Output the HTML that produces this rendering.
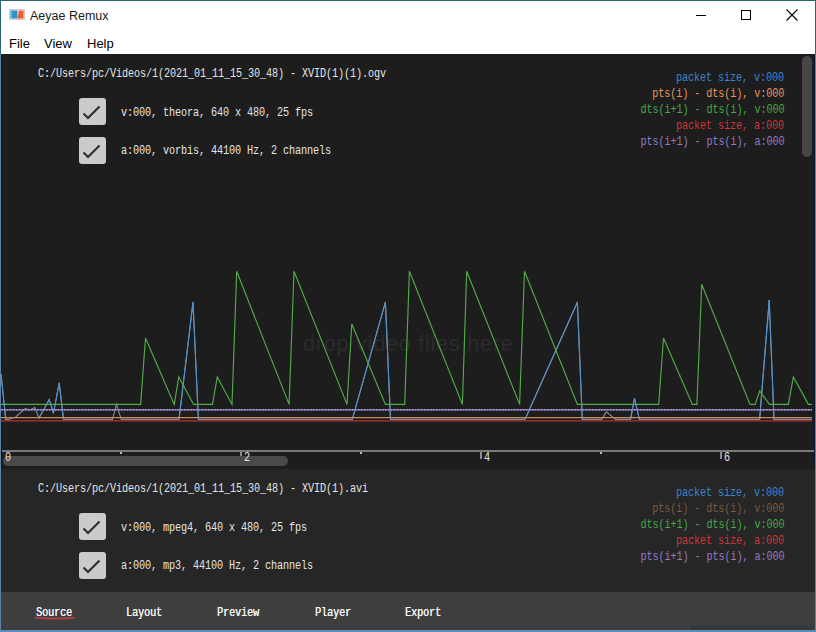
<!DOCTYPE html>
<html><head><meta charset="utf-8">
<style>
*{margin:0;padding:0;box-sizing:border-box}
html,body{width:816px;height:632px;overflow:hidden;background:#fff}
body{position:relative;font-family:"Liberation Sans",sans-serif}
.abs{position:absolute}
.mono{font-family:"Liberation Mono",monospace;font-size:12px;letter-spacing:-0.14px;white-space:pre;line-height:14px;transform:scaleX(0.85);transform-origin:0 0}
.cb{position:absolute;width:27px;height:27px;background:#cbcbcb;border-radius:3px}
.cb svg{position:absolute;left:0;top:0}
.leg{position:absolute;right:32px;text-align:right;transform-origin:100% 0 !important}
.tab{position:absolute;top:606px;color:#f2f2f2;text-shadow:0.25px 0 0 #f2f2f2}
</style></head><body>
<!-- borders -->
<div class="abs" style="left:0;top:0;width:816px;height:1px;background:#2b6478"></div>
<div class="abs" style="left:0;top:0;width:1px;height:54px;background:#2b6478"></div>
<div class="abs" style="left:815px;top:0;width:1px;height:54px;background:#2b6478"></div>
<!-- title -->
<svg class="abs" style="left:9px;top:9px" width="16" height="11">
<rect x="0.5" y="0.5" width="15" height="10" fill="#f2e6e6" stroke="#d9c9c9"/>
<rect x="1.5" y="1.5" width="7" height="8" fill="#2a94cc"/>
<rect x="1.5" y="1.5" width="1.2" height="8" fill="#7cc8ea"/>
<polygon points="10,1.5 14.5,1.5 14.5,9.5 8.5,9.5" fill="#ee5e2c"/>
</svg>
<div class="abs" style="left:30px;top:9px;font-size:12.5px;color:#1a1a1a">Aeyae Remux</div>
<div class="abs" style="left:696px;top:15px;width:10px;height:1px;background:#000"></div>
<div class="abs" style="left:741px;top:10px;width:10px;height:10px;border:1px solid #000"></div>
<svg class="abs" style="left:786px;top:9px" width="12" height="12"><path d="M0.5 0.5L11.5 11.5M11.5 0.5L0.5 11.5" stroke="#000" stroke-width="1.1"/></svg>
<!-- menu -->
<div class="abs" style="left:9px;top:36px;font-size:13px;color:#000">File</div>
<div class="abs" style="left:44px;top:36px;font-size:13px;color:#000">View</div>
<div class="abs" style="left:87px;top:36px;font-size:13px;color:#000">Help</div>
<!-- chart panel -->
<div class="abs" style="left:1px;top:54px;width:814px;height:415px;background:#1d1d1d"></div>
<div class="abs mono" style="left:38px;top:67px;color:#e4e4e4">C:/Users/pc/Videos/1(2021_01_11_15_30_48) - XVID(1)(1).ogv</div>
<div class="cb" style="left:79px;top:98px"><svg width="27" height="27"><path d="M4.5 15.5L9 20L20.5 8.5" fill="none" stroke="#303030" stroke-width="2.2"/></svg></div>
<div class="abs mono" style="left:121px;top:106px;color:#e4e4e4">v:000, theora, 640 x 480, 25 fps</div>
<div class="cb" style="left:79px;top:137px"><svg width="27" height="27"><path d="M4.5 15.5L9 20L20.5 8.5" fill="none" stroke="#303030" stroke-width="2.2"/></svg></div>
<div class="abs mono" style="left:121px;top:144px;color:#e4e4e4">a:000, vorbis, 44100 Hz, 2 channels</div>
<div class="abs" style="left:303px;top:332px;font-size:21.5px;letter-spacing:0.8px;color:#2b2b2b;white-space:pre">drop video files here</div>
<svg class="abs" style="left:0;top:0;z-index:5" width="816" height="632">
<polyline points="1.0,374.0 5.7,419.4 8.7,419.4 15.7,417.0 25.2,408.5 30.0,410.0 34.8,407.5 39.0,418.0 49.2,399.6 53.5,413.0 59.2,383.0 63.5,419.4 112.4,419.4 116.5,404.4 121.3,419.4 179.0,419.4 193.0,302.2 198.4,419.4 352.3,419.4 385.4,302.2 390.5,419.4 525.0,419.4 577.4,302.2 582.3,419.4 601.7,419.4 606.3,411.9 615.7,419.4 630.5,419.4 634.5,398.4 639.4,419.4 759.6,419.4 769.2,300.4 774.0,419.4 812.0,419.4" fill="none" stroke="#7d8fa8" stroke-width="1.1"/>
<line x1="1" y1="374" x2="5.7" y2="419.4" stroke="#5292cc" stroke-width="1.05" stroke-linecap="round"/>
<line x1="39" y1="418" x2="49.2" y2="399.6" stroke="#5292cc" stroke-width="1.05" stroke-linecap="round"/>
<line x1="49.2" y1="399.6" x2="53.5" y2="413" stroke="#5292cc" stroke-width="1.05" stroke-linecap="round"/>
<line x1="53.5" y1="413" x2="59.2" y2="383" stroke="#5292cc" stroke-width="1.05" stroke-linecap="round"/>
<line x1="59.2" y1="383" x2="63.5" y2="419.4" stroke="#5292cc" stroke-width="1.05" stroke-linecap="round"/>
<line x1="179" y1="419.4" x2="193" y2="302.2" stroke="#5292cc" stroke-width="1.05" stroke-linecap="round"/>
<line x1="193" y1="302.2" x2="198.4" y2="419.4" stroke="#5292cc" stroke-width="1.05" stroke-linecap="round"/>
<line x1="352.3" y1="419.4" x2="385.4" y2="302.2" stroke="#5292cc" stroke-width="1.05" stroke-linecap="round"/>
<line x1="385.4" y1="302.2" x2="390.5" y2="419.4" stroke="#5292cc" stroke-width="1.05" stroke-linecap="round"/>
<line x1="525" y1="419.4" x2="577.4" y2="302.2" stroke="#5292cc" stroke-width="1.05" stroke-linecap="round"/>
<line x1="577.4" y1="302.2" x2="582.3" y2="419.4" stroke="#5292cc" stroke-width="1.05" stroke-linecap="round"/>
<line x1="630.5" y1="419.4" x2="634.5" y2="398.4" stroke="#5292cc" stroke-width="1.05" stroke-linecap="round"/>
<line x1="634.5" y1="398.4" x2="639.4" y2="419.4" stroke="#5292cc" stroke-width="1.05" stroke-linecap="round"/>
<line x1="759.6" y1="419.4" x2="769.2" y2="300.4" stroke="#5292cc" stroke-width="1.05" stroke-linecap="round"/>
<line x1="769.2" y1="300.4" x2="774" y2="419.4" stroke="#5292cc" stroke-width="1.05" stroke-linecap="round"/>
<line x1="1" y1="409.8" x2="812" y2="409.8" stroke="#7e6cae" stroke-width="1.4"/>
<line x1="1" y1="409.8" x2="812" y2="409.8" stroke="#b4a6dc" stroke-width="1.2" stroke-dasharray="1.5,1.5"/>
<line x1="1" y1="417.6" x2="812" y2="417.6" stroke="#d08a52" stroke-width="1.1"/>
<line x1="1" y1="420.8" x2="812" y2="420.8" stroke="#b83232" stroke-width="1.2"/>
<polyline points="1.0,404.4 140.6,404.4 145.5,338.0 174.2,404.4 178.8,377.0 193.6,404.4 212.4,404.4 217.3,377.0 232.0,404.4 236.7,271.3 289.1,404.4 294.0,271.3 347.0,404.4 351.8,324.0 385.4,404.4 404.7,404.4 409.4,271.3 462.4,404.4 466.7,271.3 519.6,404.4 524.5,271.3 577.4,404.4 658.7,404.4 663.5,338.0 692.3,404.4 696.9,404.4 701.7,284.2 750.0,404.4 755.2,404.4 759.7,391.0 769.4,404.4 788.3,404.4 793.4,377.0 808.4,404.4 812.0,404.4" fill="none" stroke="#52ac48" stroke-width="1.15"/>
</svg>
<div class="abs" style="left:802px;top:56px;width:10px;height:101px;border-radius:5px;background:#474747"></div>
<div class="abs" style="left:1px;top:450px;width:814px;height:2px;background:#7a7a7a"></div>
<div class="abs" style="left:240px;top:452px;width:2px;height:7px;background:#8c8c8c"></div>
<div class="abs" style="left:120px;top:452px;width:2px;height:2px;background:#bbb"></div>
<div class="abs" style="left:360px;top:452px;width:2px;height:2px;background:#bbb"></div>
<div class="abs" style="left:600px;top:452px;width:2px;height:2px;background:#bbb"></div>
<div class="abs" style="left:480px;top:452px;width:2px;height:7px;background:#8c8c8c"></div>
<div class="abs" style="left:720px;top:452px;width:2px;height:7px;background:#8c8c8c"></div>
<div class="abs" style="left:3px;top:456px;width:285px;height:10px;border-radius:5px;background:#4a4a4a"></div>
<div class="abs mono" style="left:5px;top:451px;color:#e4e4e4">0</div>
<div class="abs mono" style="left:244px;top:451px;color:#e4e4e4">2</div>
<div class="abs mono" style="left:484px;top:451px;color:#e4e4e4">4</div>
<div class="abs mono" style="left:724px;top:451px;color:#e4e4e4">6</div>
<div class="leg mono" style="top:71px;color:#3a84c8">packet size, v:000</div>
<div class="leg mono" style="top:87px;color:#e8945a">pts(i) - dts(i), v:000</div>
<div class="leg mono" style="top:103px;color:#44a844">dts(i+1) - dts(i), v:000</div>
<div class="leg mono" style="top:119px;color:#cc3636">packet size, a:000</div>
<div class="leg mono" style="top:135px;color:#9478c4">pts(i+1) - pts(i), a:000</div>
<!-- lower panel -->
<div class="abs" style="left:1px;top:469px;width:814px;height:123px;background:#262626"></div>
<div class="abs" style="left:0;top:54px;width:1px;height:578px;background:#5b84a8"></div>
<div class="abs" style="left:815px;top:54px;width:1px;height:578px;background:#5b84a8"></div>
<div class="abs" style="left:1px;top:54px;width:1px;height:415px;background:#0c1828"></div>
<div class="abs" style="left:814px;top:54px;width:1px;height:415px;background:#0c1828"></div>

<div class="abs mono" style="left:38px;top:482px;color:#e4e4e4">C:/Users/pc/Videos/1(2021_01_11_15_30_48) - XVID(1).avi</div>
<div class="cb" style="left:79px;top:513px"><svg width="27" height="27"><path d="M4.5 15.5L9 20L20.5 8.5" fill="none" stroke="#303030" stroke-width="2.2"/></svg></div>
<div class="abs mono" style="left:121px;top:521px;color:#e4e4e4">v:000, mpeg4, 640 x 480, 25 fps</div>
<div class="cb" style="left:79px;top:552px"><svg width="27" height="27"><path d="M4.5 15.5L9 20L20.5 8.5" fill="none" stroke="#303030" stroke-width="2.2"/></svg></div>
<div class="abs mono" style="left:121px;top:559px;color:#e4e4e4">a:000, mp3, 44100 Hz, 2 channels</div>
<div class="leg mono" style="top:486px;color:#3a84c8">packet size, v:000</div>
<div class="leg mono" style="top:502px;color:#7a5a3c">pts(i) - dts(i), v:000</div>
<div class="leg mono" style="top:518px;color:#44a844">dts(i+1) - dts(i), v:000</div>
<div class="leg mono" style="top:534px;color:#cc3636">packet size, a:000</div>
<div class="leg mono" style="top:550px;color:#9478c4">pts(i+1) - pts(i), a:000</div>
<!-- tab bar -->
<div class="abs" style="left:1px;top:592px;width:814px;height:38px;background:#3e3e3e"></div>
<div class="tab mono" style="left:36px">Source</div>
<svg class="abs" style="left:34px;top:616px" width="42" height="5"><path d="M1 1.6Q21 3.6 41 1.6" fill="none" stroke="#b84040" stroke-width="1.8"/></svg>
<div class="tab mono" style="left:126px">Layout</div>
<div class="tab mono" style="left:217px">Preview</div>
<div class="tab mono" style="left:315px">Player</div>
<div class="tab mono" style="left:405px">Export</div>
<div class="abs" style="left:690px;top:626px;width:122px;height:4px;background:#33383e"></div>
<div class="abs" style="left:0;top:630px;width:816px;height:2px;background:#5a8cbc"></div>
</body></html>
